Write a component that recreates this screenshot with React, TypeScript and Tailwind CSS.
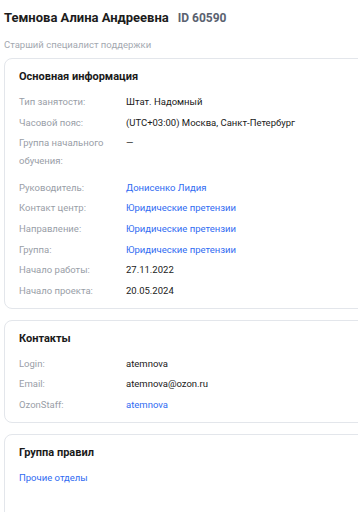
const font = { fontFamily: "Roboto, 'Noto Sans', sans-serif" };

type Row = { label: string; value: string; link?: boolean; tall?: boolean };

const mainInfo: Row[] = [
  { label: "Тип занятости:", value: "Штат. Надомный" },
  { label: "Часовой пояс:", value: "(UTC+03:00) Москва, Санкт-Петербург" },
  { label: "Группа начального обучения:", value: "—", tall: true },
  { label: "Руководитель:", value: "Донисенко Лидия", link: true },
  { label: "Контакт центр:", value: "Юридические претензии", link: true },
  { label: "Направление:", value: "Юридические претензии", link: true },
  { label: "Группа:", value: "Юридические претензии", link: true },
  { label: "Начало работы:", value: "27.11.2022" },
  { label: "Начало проекта:", value: "20.05.2024" },
];

const contacts: Row[] = [
  { label: "Login:", value: "atemnova" },
  { label: "Email:", value: "atemnova@ozon.ru" },
  { label: "OzonStaff:", value: "atemnova", link: true },
];

function InfoRows({ rows }: { rows: Row[] }) {
  return (
    <div className="flex flex-col gap-[2.6px]">
      {rows.map((r, i) => (
        <div key={i} className={r.tall ? "flex pb-[6px]" : "flex"}>
          <div className="w-[107px] shrink-0 pr-3 text-[9.5px] leading-[18px] text-[#999ea7]">
            {r.label}
          </div>
          <div
            className={
              r.link
                ? "text-[9.5px] leading-[18px] text-[#2f6bf2]"
                : "text-[9.5px] leading-[18px] text-[#1a1a1a]"
            }
          >
            {r.value}
          </div>
        </div>
      ))}
    </div>
  );
}

function Card({
  title,
  children,
  className = "",
}: {
  title: string;
  children: React.ReactNode;
  className?: string;
}) {
  return (
    <div
      className={
        "w-[400px] rounded-lg border border-[#e3e6eb] bg-white px-[14px] pt-[10px] " +
        className
      }
    >
      <div className="mb-[8px] text-[11px] font-bold leading-[16px] text-[#1a1a1a]">
        {title}
      </div>
      {children}
    </div>
  );
}

export default function App() {
  return (
    <div className="h-[512px] w-[358px] overflow-hidden bg-white pl-[4px] pt-[8px]" style={font}>
      <div className="flex items-baseline gap-[9px] text-[13px] font-bold leading-[20px]">
        <span className="text-[#1c1c1c]">Темнова Алина Андреевна</span>
        <span className="text-[12px] text-[#5b6270]">ID 60590</span>
      </div>
      <div className="mt-[10px] text-[9.5px] leading-[14px] text-[#a3a8b0]">
        Старший специалист поддержки
      </div>

      <div className="mt-[6px] flex flex-col gap-[11px]">
        <Card title="Основная информация" className="pb-[8px]">
          <InfoRows rows={mainInfo} />
        </Card>
        <Card title="Контакты" className="pb-[8px]">
          <InfoRows rows={contacts} />
        </Card>
        <Card title="Группа правил" className="pb-[32px]">
          <div className="text-[9.5px] leading-[18px] text-[#2f6bf2]">Прочие отделы</div>
        </Card>
      </div>
    </div>
  );
}
